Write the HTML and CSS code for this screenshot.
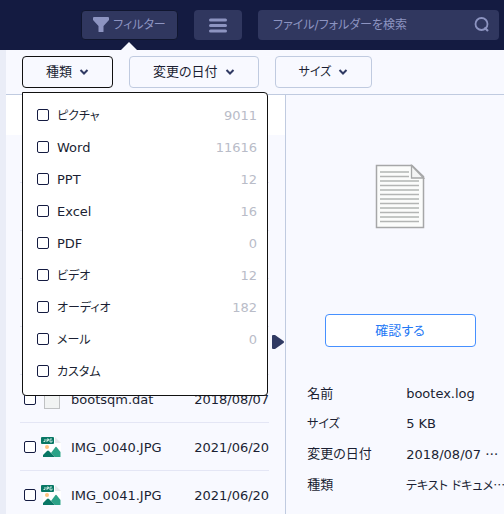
FILE: index.html
```
<!DOCTYPE html>
<html lang="ja">
<head>
    <meta charset="UTF-8">
    <meta name="viewport" content="width=device-width, initial-scale=1.0">
    <title>フィルター</title>
    <link rel="stylesheet" href="styles.css">
</head>
<body>
    <header class="topbar">
        <button class="top-btn filter-btn" type="button">
            <svg width="16" height="16" viewBox="0 0 16 16"><path d="M1 0H15Q16 0 16 1V3L10.500 9V14.500Q10.500 15 10 15H6Q5.500 15 5.500 14.500V9L0 3V1Q0 0 1 0Z" fill="#8d94c1"/></svg>
            フィルター
        </button>
        <button class="top-btn list-btn" type="button" aria-label="リスト">
            <svg width="18" height="15" viewBox="0 0 18 15" stroke="#8d94c1" stroke-width="3" stroke-linecap="round"><path d="M1.500 2H16.500M1.500 7.500H16.500M1.500 13H16.500"/></svg>
        </button>
        <label class="search">
            <input type="text" placeholder="ファイル/フォルダーを検索" aria-label="ファイル/フォルダーを検索">
            <svg width="16" height="16" viewBox="0 0 16 16" fill="none" stroke="#8d94c1" stroke-width="1.800"><circle cx="7.500" cy="7" r="6"/><path d="M10.500 10.500L14 14" stroke-width="2.200"/></svg>
        </label>
    </header>

    <div class="page">
        <nav class="filters">
            <div class="filter">
                <button class="filter-select active" type="button">種類
                    <svg width="10" height="8" viewBox="0 0 10 8"><path d="M1.500 2L5 5.500L8.500 2"/></svg>
                </button>
                <div class="menu">
                    <label><input type="checkbox"><span class="kana">ピクチャ</span><span class="count">9011</span></label>
                    <label><input type="checkbox"><span>Word</span><span class="count">11616</span></label>
                    <label><input type="checkbox"><span>PPT</span><span class="count">12</span></label>
                    <label><input type="checkbox"><span>Excel</span><span class="count">16</span></label>
                    <label><input type="checkbox"><span>PDF</span><span class="count">0</span></label>
                    <label><input type="checkbox"><span class="kana">ビデオ</span><span class="count">12</span></label>
                    <label><input type="checkbox"><span class="kana">オーディオ</span><span class="count">182</span></label>
                    <label><input type="checkbox"><span class="kana">メール</span><span class="count">0</span></label>
                    <label><input type="checkbox"><span class="kana">カスタム</span></label>
                </div>
            </div>
            <button class="filter-select" type="button">変更の日付
                <svg width="10" height="8" viewBox="0 0 10 8"><path d="M1.500 2L5 5.500L8.500 2"/></svg>
            </button>
            <button class="filter-select kana" type="button">サイズ
                <svg width="10" height="8" viewBox="0 0 10 8"><path d="M1.500 2L5 5.500L8.500 2"/></svg>
            </button>
        </nav>

        <main class="content">
            <section class="files">
                <div class="files-head"></div>
                <ul class="file-list">
                    <li></li>
                    <li></li>
                    <li></li>
                    <li></li>
                    <li></li>
                    <li>
                        <input type="checkbox" id="file1">
                        <svg width="20" height="20" viewBox="0 0 20 20"><rect x="3.500" y="0.500" width="15" height="19" fill="#f1f3f3" stroke="#bfc1c3"/></svg>
                        <label for="file1">bootsqm.dat</label>
                        <span class="date">2018/08/07</span>
                    </li>
                    <li>
                        <input type="checkbox" id="file2">
                        <svg width="20" height="20" viewBox="0 0 20 20"><path d="M2 0H14L20 6V20H2Z" fill="#fff"/><path d="M14 0L20 6H14Z" fill="#e6e8ec"/><rect width="13" height="7" rx="1" fill="#087765"/><path d="M4 2V4.500H2.500M6 5V2H7.500V3.500H6M11 2H9V5H11V3.500" fill="none" stroke="#d8f3ea" stroke-width="0.900"/><circle cx="6" cy="10" r="2" fill="#fdc27e"/><path d="M10 16L14.500 10Q15 9.500 15.500 10L19.500 15V20H14Z" fill="#2ba287"/><path d="M2 20V18L6 14Q7 13 8 14L14 20Z" fill="#087765"/></svg>
                        <label for="file2">IMG_0040.JPG</label>
                        <span class="date">2021/06/20</span>
                    </li>
                    <li>
                        <input type="checkbox" id="file3">
                        <svg width="20" height="20" viewBox="0 0 20 20"><path d="M2 0H14L20 6V20H2Z" fill="#fff"/><path d="M14 0L20 6H14Z" fill="#e6e8ec"/><rect width="13" height="7" rx="1" fill="#087765"/><path d="M4 2V4.500H2.500M6 5V2H7.500V3.500H6M11 2H9V5H11V3.500" fill="none" stroke="#d8f3ea" stroke-width="0.900"/><circle cx="6" cy="10" r="2" fill="#fdc27e"/><path d="M10 16L14.500 10Q15 9.500 15.500 10L19.500 15V20H14Z" fill="#2ba287"/><path d="M2 20V18L6 14Q7 13 8 14L14 20Z" fill="#087765"/></svg>
                        <label for="file3">IMG_0041.JPG</label>
                        <span class="date">2021/06/20</span>
                    </li>
                </ul>
                <svg class="collapse" width="12" height="14" viewBox="0 0 12 14"><path d="M0 1Q0 0 1 0H3L11.500 6Q12.500 7 11.500 8L3 14H1Q0 14 0 13Z" fill="#303a63"/></svg>
            </section>

            <aside class="details">
                <svg class="preview" width="50" height="66" viewBox="0 0 50 66">
                    <path d="M1.500 1.500H37L48.500 12.500V63.500H1.500Z" fill="#fbfcfb" stroke="#a6a7a8" stroke-width="1.500"/>
                    <path d="M36.500 1.500V14H48.500Z" fill="#f3f4f4" stroke="#a6a7a8" stroke-width="1.300"/>
                    <path d="M5 8H34M5 12.500H34M5 17H44M5 21.500H44M5 26H44M5 30.500H44M5 35H44M5 39.500H44M5 44H44M5 48.500H44M5 53H44M5 57.500H44" stroke="#b3b5b4" stroke-width="1.600"/>
                </svg>
                <button class="confirm-btn" type="button">確認する</button>
                <dl class="info">
                    <dt>名前</dt>
                    <dd>bootex.log</dd>
                    <dt class="kana">サイズ</dt>
                    <dd>5 KB</dd>
                    <dt>変更の日付</dt>
                    <dd>2018/08/07 <span class="more">…</span></dd>
                    <dt>種類</dt>
                    <dd class="kana">テキスト ドキュメ<span class="more">…</span></dd>
                </dl>
            </aside>
        </main>
    </div>
</body>
</html>
```
FILE: styles.css
```
* {
    box-sizing: border-box;
}

body {
    margin: 0;
    min-height: 100vh;
    display: flex;
    flex-direction: column;
    background-color: #f8f9ff;
    color: #1b1f33;
    font-family: "DejaVu Sans", "Noto Sans CJK JP", sans-serif;
    font-size: 13px;
    line-height: 20px;
    font-feature-settings: "palt";
    overflow: hidden;
}

button, input {
    font: inherit;
    font-feature-settings: inherit;
    color: inherit;
    margin: 0;
}

button {
    display: flex;
    align-items: center;
    justify-content: center;
    white-space: nowrap;
    cursor: pointer;
}

svg {
    flex-shrink: 0;
}

.kana {
    font-size: 12px;
}

/* top bar */
.topbar {
    display: flex;
    gap: 16px;
    padding: 10px 5px 10px 81px;
    background-color: #141b41;
    font-size: 12px;
}

.top-btn, .search {
    height: 30px;
    border: none;
    border-radius: 4px;
    background-color: #30375f;
    color: #8d94c1;
}

.top-btn {
    padding: 0 10px;
    gap: 4px;
}

.filter-btn {
    position: relative;
    min-width: 97px;
    border: 1px solid #10162f;
}

/* pointer down to the filter row */
.filter-btn::after {
    content: "";
    position: absolute;
    left: 50%;
    bottom: -11px;
    margin-left: -9px;
    border: 8px solid transparent;
    border-top: none;
    border-bottom-color: #f8f9ff;
}

.list-btn {
    min-width: 48px;
}

.search {
    flex: 1;
    display: flex;
    align-items: center;
    padding: 0 9px 0 15px;
}

.search input {
    flex: 1;
    min-width: 0;
    padding: 0;
    border: none;
    outline: none;
    background: none;
}

.search input::placeholder {
    color: #8d94c1;
}

/* filter row */
.page {
    flex: 1;
    display: flex;
    flex-direction: column;
    border-left: 6px solid #eaedf7;
}

.filters {
    display: flex;
    gap: 16px;
    padding: 6px 16px;
    border-bottom: 1px solid #c0cbe0;
}

.filter {
    position: relative;
}

.filter-select {
    height: 32px;
    padding: 0 23px;
    gap: 7px;
    border: 1px solid #c0cbe0;
    border-radius: 4px;
    background-color: #f8f9ff;
}

.filter-select.active {
    border-color: #111;
}

.filter-select path {
    fill: none;
    stroke: #303a63;
    stroke-width: 2;
}

.menu {
    position: absolute;
    top: 36px;
    left: 0;
    z-index: 1;
    width: 246px;
    padding: 6px 10px 8px 14px;
    border: 1px solid #111;
    border-radius: 0 4px 4px 4px;
    background-color: #fff;
}

.menu label {
    display: flex;
    align-items: center;
    gap: 8px;
    height: 32px;
}

.menu span {
    padding-top: 2px;
}

.count {
    margin-left: auto;
    color: #b9bcc8;
}

input[type="checkbox"] {
    appearance: none;
    flex-shrink: 0;
    width: 12px;
    height: 12px;
    border: 1px solid #141b41;
    border-radius: 2px;
    background-color: #fff;
}

/* file list */
.content {
    flex: 1;
    display: grid;
    grid-template-columns: 9fr minmax(0, 7fr);
}

.files {
    position: relative;
    border-right: 1px solid #c0cbe0;
}

.files-head {
    height: 40px;
    background-color: #fff;
}

.file-list {
    list-style: none;
    margin: 0;
    padding: 0 16px 0 14px;
}

.file-list li {
    display: flex;
    align-items: center;
    height: 48px;
    padding-left: 4px;
    border-bottom: 1px solid #e4e6f5;
}

.file-list svg {
    margin: 0 10px 0 5px;
}

.file-list label, .date {
    padding-top: 3px;
}

.date {
    margin-left: auto;
}

.collapse {
    position: absolute;
    top: 240px;
    right: 1px;
}

/* details */
.details {
    display: flex;
    flex-direction: column;
    align-items: center;
    padding: 69px 11px 0 21px;
}

.confirm-btn {
    width: 151px;
    height: 33px;
    margin: 84px 0 32px;
    border: 1px solid #4690ff;
    border-radius: 4px;
    background-color: #fff;
    color: #2378f5;
}

.info {
    width: 100%;
    margin: 0;
    display: grid;
    grid-template-columns: 99px minmax(0, 1fr);
    line-height: 30px;
}

.info dd {
    margin: 0;
    white-space: nowrap;
}

.more {
    font-family: "Noto Sans CJK JP", sans-serif;
}
```
